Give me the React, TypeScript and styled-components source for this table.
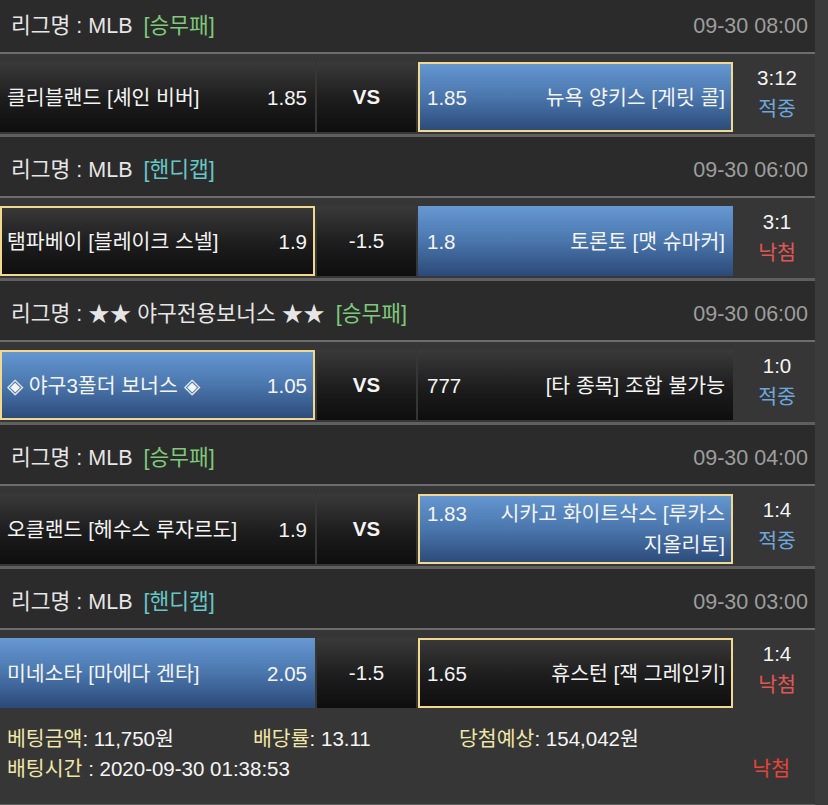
import React from 'react';
import styled, { createGlobalStyle, css } from 'styled-components';

const GlobalStyle = createGlobalStyle`
  * { box-sizing: border-box; }
  body {
    margin: 0;
    background: #3b3b3b;
    font-family: "Liberation Sans", "Noto Sans CJK KR", sans-serif;
    font-size: 20.5px;
    color: #f2f2f2;
  }
`;

type Tone = 'dark' | 'blue';

interface Side {
  name: string;
  odds: string;
  tone: Tone;
  picked?: boolean;
}

interface Match {
  league: string;
  type: '승무패' | '핸디캡';
  date: string;
  home: Side;
  mid: string;
  away: Side;
  score: string;
  result: '적중' | '낙첨';
}

const matches: Match[] = [
  {
    league: 'MLB', type: '승무패', date: '09-30 08:00',
    home: { name: '클리블랜드 [셰인 비버]', odds: '1.85', tone: 'dark' },
    mid: 'VS',
    away: { name: '뉴욕 양키스 [게릿 콜]', odds: '1.85', tone: 'blue', picked: true },
    score: '3:12', result: '적중',
  },
  {
    league: 'MLB', type: '핸디캡', date: '09-30 06:00',
    home: { name: '탬파베이 [블레이크 스넬]', odds: '1.9', tone: 'dark', picked: true },
    mid: '-1.5',
    away: { name: '토론토 [맷 슈마커]', odds: '1.8', tone: 'blue' },
    score: '3:1', result: '낙첨',
  },
  {
    league: '★★ 야구전용보너스 ★★', type: '승무패', date: '09-30 06:00',
    home: { name: '◈ 야구3폴더 보너스 ◈', odds: '1.05', tone: 'blue', picked: true },
    mid: 'VS',
    away: { name: '[타 종목] 조합 불가능', odds: '777', tone: 'dark' },
    score: '1:0', result: '적중',
  },
  {
    league: 'MLB', type: '승무패', date: '09-30 04:00',
    home: { name: '오클랜드 [헤수스 루자르도]', odds: '1.9', tone: 'dark' },
    mid: 'VS',
    away: { name: '시카고 화이트삭스 [루카스 지올리토]', odds: '1.83', tone: 'blue', picked: true },
    score: '1:4', result: '적중',
  },
  {
    league: 'MLB', type: '핸디캡', date: '09-30 03:00',
    home: { name: '미네소타 [마에다 겐타]', odds: '2.05', tone: 'blue' },
    mid: '-1.5',
    away: { name: '휴스턴 [잭 그레인키]', odds: '1.65', tone: 'dark', picked: true },
    score: '1:4', result: '낙첨',
  },
];

const Page = styled.div`
  width: 815px;
  background: #363636;
`;

const LeagueHeader = styled.div<{ $first?: boolean }>`
  display: flex;
  align-items: center;
  justify-content: space-between;
  height: ${(p) => (p.$first ? 54 : 61)}px;
  padding: ${(p) => (p.$first ? 0 : 7)}px 7px 0 11px;
  background: #2b2b2b;
  border-bottom: 2px solid #6d6d6d;
  font-size: 21.5px;
  line-height: 24px;
`;

const LeagueName = styled.span`
  color: #e6e6e6;
`;

const BetType = styled.span<{ $kind: string }>`
  margin-left: 11px;
  color: ${(p) => (p.$kind === '핸디캡' ? '#67c6c6' : '#7ec97a')};
`;

const DateText = styled.span`
  color: #9d9d9d;
`;

const MatchRow = styled.div<{ $last?: boolean }>`
  display: grid;
  grid-template-columns: 315px 99px 315px 1fr;
  column-gap: 2px;
  height: ${(p) => (p.$last ? 80 : 83)}px;
  padding: 8px 0 2px;
  border-bottom: ${(p) => (p.$last ? 'none' : '3px solid #5f5f5f')};
`;

const toneBg = {
  dark: 'linear-gradient(to bottom, #3a3a3a 0%, #1c1c1c 55%, #0e0e0e 100%)',
  blue: 'linear-gradient(to bottom, #6698d2 0%, #4a76ad 50%, #2b4977 100%)',
};

const TeamCell = styled.div<{ $tone: Tone; $picked?: boolean; $away?: boolean }>`
  display: flex;
  align-items: center;
  padding: 0 8px 0 ${(p) => (p.$away ? 9 : 7)}px;
  background: ${(p) => toneBg[p.$tone]};
  line-height: 31px;
  color: #f4f4f4;
  ${(p) =>
    p.$picked &&
    css`
      box-shadow: inset 0 0 0 2px #f2d98e;
    `}
`;

const TeamLine = styled.div`
  display: flex;
  align-items: flex-start;
  width: 100%;
`;

const TeamName = styled.span<{ $away?: boolean }>`
  flex: 1;
  text-align: ${(p) => (p.$away ? 'right' : 'left')};
`;

const Odds = styled.span<{ $away?: boolean }>`
  flex: none;
  ${(p) =>
    p.$away
      ? css`
          width: 70px;
        `
      : css`
          margin-left: 12px;
        `}
`;

const MidCell = styled.div<{ $vs: boolean }>`
  display: flex;
  align-items: center;
  justify-content: center;
  background: ${toneBg.dark};
  font-weight: ${(p) => (p.$vs ? 700 : 400)};
  color: #f4f4f4;
`;

const ScoreCol = styled.div`
  display: flex;
  flex-direction: column;
  align-items: center;
  justify-content: center;
  padding: 0 0 8px 4px;
  line-height: 31px;
`;

const Score = styled.span`
  color: #f4f4f4;
`;

const Result = styled.span<{ $hit: boolean }>`
  color: ${(p) => (p.$hit ? '#6ea6de' : '#e05654')};
`;

const Summary = styled.div`
  display: grid;
  grid-template-columns: 246px 206px 1fr;
  grid-auto-rows: 30px;
  align-items: center;
  padding: 10px 0 22px 7px;
  border-top: 2px solid #363636;
  border-bottom: 3px solid #5f5f5f;
  color: #f4f4f4;
`;

const Label = styled.span`
  color: #efe6a6;
`;

const SummaryItem = styled.div<{ $span?: number }>`
  grid-column: span ${(p) => p.$span ?? 1};
  white-space: nowrap;
`;

const FinalResult = styled.div`
  justify-self: end;
  padding-right: 25px;
  color: #e8433a;
`;

function TeamBox({ side, away }: { side: Side; away?: boolean }) {
  return (
    <TeamCell $tone={side.tone} $picked={side.picked} $away={away}>
      <TeamLine>
        {away ? (
          <>
            <Odds $away>{side.odds}</Odds>
            <TeamName $away>{side.name}</TeamName>
          </>
        ) : (
          <>
            <TeamName>{side.name}</TeamName>
            <Odds>{side.odds}</Odds>
          </>
        )}
      </TeamLine>
    </TeamCell>
  );
}

export default function App() {
  return (
    <>
      <GlobalStyle />
      <Page>
        {matches.map((m, i) => (
          <React.Fragment key={i}>
            <LeagueHeader $first={i === 0}>
              <span>
                <LeagueName>리그명 : {m.league}</LeagueName>
                <BetType $kind={m.type}>[{m.type}]</BetType>
              </span>
              <DateText>{m.date}</DateText>
            </LeagueHeader>
            <MatchRow $last={i === matches.length - 1}>
              <TeamBox side={m.home} />
              <MidCell $vs={m.mid === 'VS'}>{m.mid}</MidCell>
              <TeamBox side={m.away} away />
              <ScoreCol>
                <Score>{m.score}</Score>
                <Result $hit={m.result === '적중'}>{m.result}</Result>
              </ScoreCol>
            </MatchRow>
          </React.Fragment>
        ))}
        <Summary>
          <SummaryItem>
            <Label>베팅금액</Label>: 11,750원
          </SummaryItem>
          <SummaryItem>
            <Label>배당률</Label>: 13.11
          </SummaryItem>
          <SummaryItem>
            <Label>당첨예상</Label>: 154,042원
          </SummaryItem>
          <SummaryItem $span={2}>
            <Label>배팅시간</Label> : 2020-09-30 01:38:53
          </SummaryItem>
          <FinalResult>낙첨</FinalResult>
        </Summary>
      </Page>
    </>
  );
}
